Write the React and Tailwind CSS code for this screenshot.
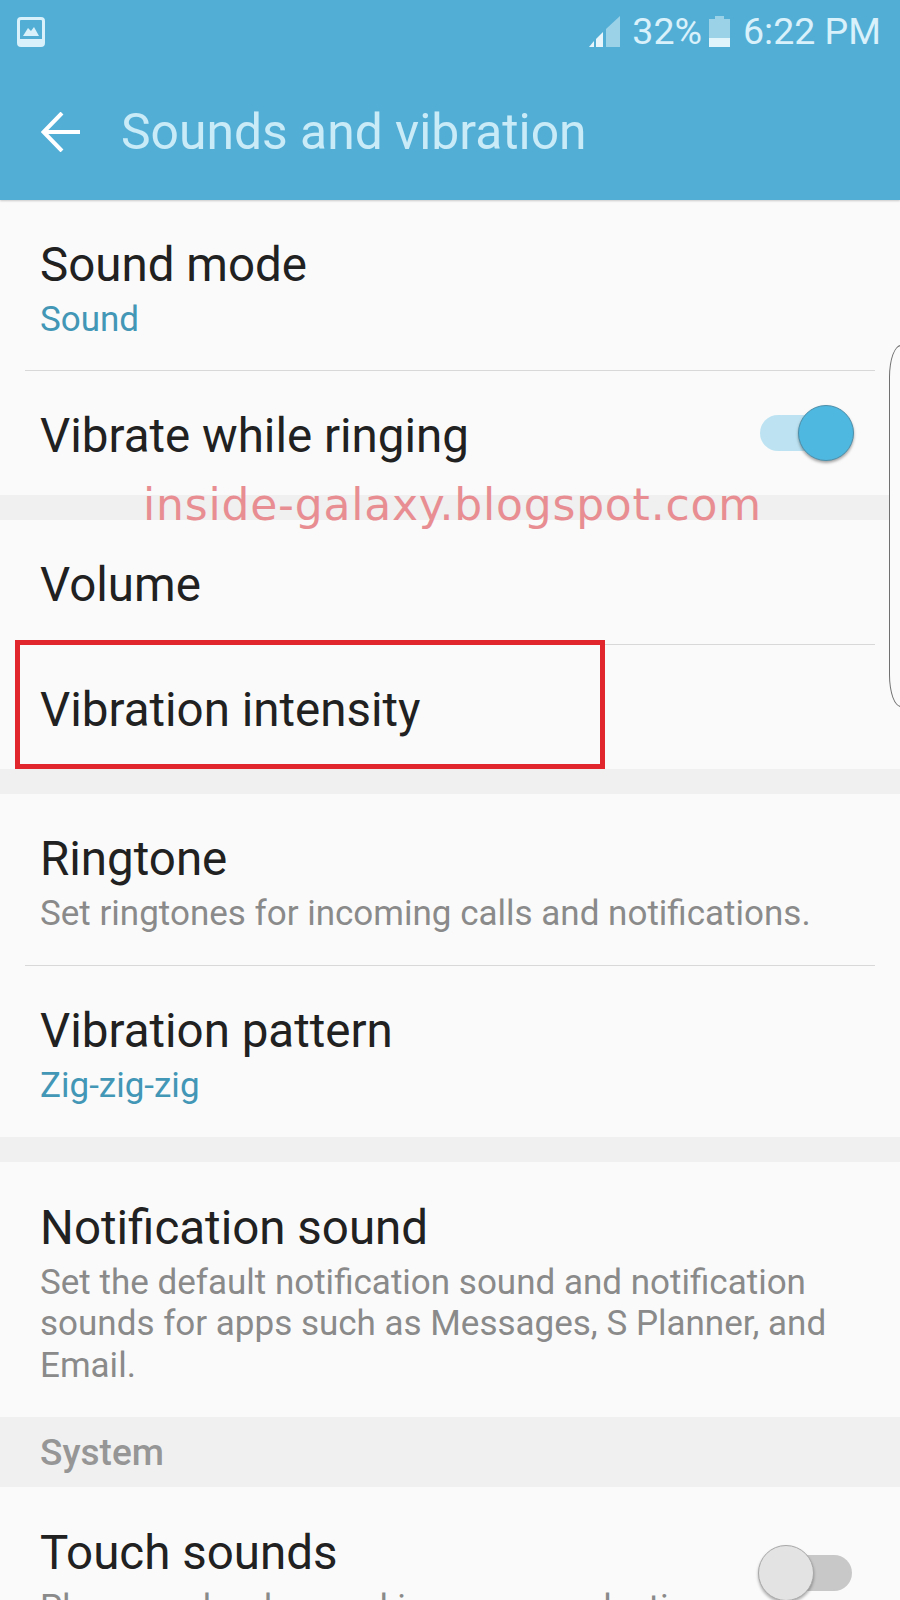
const FONT = 'font-["Roboto","Liberation_Sans",sans-serif]';

function Divider() {
  return <div className="mx-[25px] h-px bg-[#d8d8d8]" />;
}

function Band() {
  return <div className="h-[25px] bg-[#f0f0f0]" />;
}

function Row({ title, sub, subColor = 'text-[#8a8a8a]', height, children }) {
  return (
    <div className={`flex items-center justify-between pl-[40px] pr-[55px] ${sub ? 'pt-[9px]' : 'pt-[5px]'} ${height}`}>
      <div className="min-w-0">
        <div className="text-[47.5px] leading-[52px] text-[#212121]">{title}</div>
        {sub && <div className={`mt-[8px] whitespace-pre-line text-[35px] leading-[41.5px] ${subColor}`}>{sub}</div>}
      </div>
      {children}
    </div>
  );
}

function StatusBar() {
  return (
    <div className="flex h-[62px] items-center justify-between pl-[17px] pr-[19px] pt-px text-[37.5px] text-[#d9f1fa]">
      <svg width="28" height="30" viewBox="0 0 28 30">
        <rect x="1.5" y="1.5" width="25" height="27" rx="2.5" fill="none" stroke="#d9f1fa" strokeWidth="3" />
        <rect x="1.5" y="22" width="25" height="6" fill="#d9f1fa" />
        <path d="M6 19 L11 11 L14 14 L17 10 L22 19 Z" fill="#d9f1fa" />
      </svg>
      <div className="flex items-center">
        <svg width="31" height="31" viewBox="0 0 31 31">
          <path d="M31 0 V31 H17 V13 Z" fill="#9bd2e8" />
          <path d="M14 16 V31 H7 V23 Z" fill="#e8f6fc" />
          <path d="M5 25 V31 H0 Z" fill="#e8f6fc" />
        </svg>
        <span className="ml-[12px] leading-none">32%</span>
        <svg width="21" height="31" viewBox="0 0 21 31" className="ml-[7px]">
          <path d="M6 0 H15 V3 H21 V31 H0 V3 H6 Z" fill="#9bd2e8" />
          <rect x="0" y="22" width="21" height="9" fill="#e0f4fb" />
        </svg>
        <span className="ml-[13px] leading-none">6:22 PM</span>
      </div>
    </div>
  );
}

export default function App() {
  return (
    <div className={`relative h-[1600px] w-[900px] overflow-hidden bg-[#fafafa] ${FONT}`}>
      <header className="h-[200px] bg-[#53aed6] shadow-[0_1px_2px_rgba(0,0,0,0.2)]">
        <StatusBar />
        <div className="flex h-[138px] items-center pt-[2px] pl-[41px]">
          <svg width="40" height="40" viewBox="0 0 40 40" fill="none" stroke="#ffffff" strokeWidth="4">
            <path d="M39 20 H3 M21 1 L2.5 20 L21 39" />
          </svg>
          <span className="ml-[40px] text-[49.8px] text-[#c9ebf8]">Sounds and vibration</span>
        </div>
      </header>

      <Row title="Sound mode" sub="Sound" subColor="text-[#4296b6]" height="h-[170px]" />
      <Divider />
      <Row title="Vibrate while ringing" height="h-[124px]">
        <div className="relative mb-[6px] h-[36px] w-[85px] rounded-full bg-[#bde3f2]">
          <div className="absolute right-[-9px] top-[-10px] h-[56px] w-[56px] rounded-full border border-[#4d8faa] bg-[#4fb8e0] shadow-[0_2px_3px_rgba(0,0,0,0.35)]" />
        </div>
      </Row>
      <Band />
      <Row title="Volume" height="h-[124px]" />
      <Divider />
      <Row title="Vibration intensity" height="h-[124px]" />
      <Band />
      <Row title="Ringtone" sub="Set ringtones for incoming calls and notifications." height="h-[171px]" />
      <Divider />
      <Row title="Vibration pattern" sub="Zig-zig-zig" subColor="text-[#4296b6]" height="h-[171px]" />
      <Band />
      <Row
        title="Notification sound"
        sub={'Set the default notification sound and notification\nsounds for apps such as Messages, S Planner, and\nEmail.'}
        height="h-[255px]"
      />
      <div className="flex h-[70px] items-center bg-[#f0f0f0] pl-[40px] pt-[2px] text-[37px] font-medium text-[#969696]">System</div>
      <div className="flex justify-between pl-[40px] pr-[48px] pt-[40px]">
        <div>
          <div className="text-[47.5px] leading-[52px] text-[#212121]">Touch sounds</div>
          <div className="mt-[8px] whitespace-nowrap text-[35px] leading-[41.5px] text-[#8a8a8a]">Play sounds when making screen selection.</div>
        </div>
        <div className="relative mt-[28px] h-[36px] w-[85px] shrink-0 rounded-full bg-[#c8c8c8]">
          <div className="absolute left-[-9px] top-[-10px] h-[56px] w-[56px] rounded-full border border-[#a8a8a8] bg-[#e3e3e3] shadow-[0_2px_3px_rgba(0,0,0,0.3)]" />
        </div>
      </div>

      <div className="absolute left-[889px] top-[345px] h-[362px] w-[30px] rounded-l-[12px_32px] border border-[#707070] bg-[#fafafa]" />

      <div className='absolute left-[143px] top-[477px] whitespace-nowrap font-["DejaVu_Sans",sans-serif] text-[44px] leading-[56px] tracking-[0.8px] text-[#e88e92]'>
        inside-galaxy.blogspot.com
      </div>
      <div className="absolute left-[15px] top-[640px] h-[129px] w-[590px] border-[5px] border-[#e1272d]" />
    </div>
  );
}
